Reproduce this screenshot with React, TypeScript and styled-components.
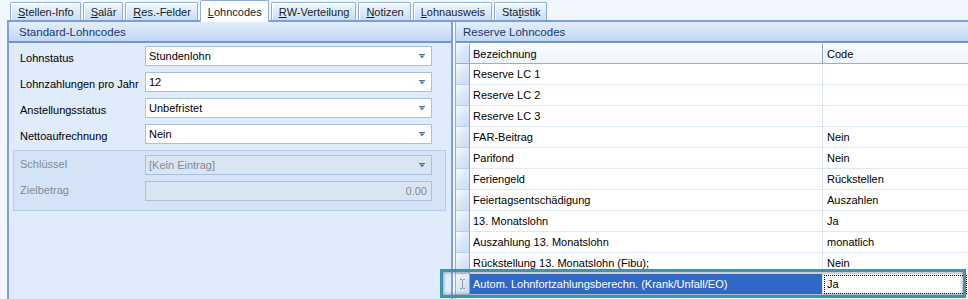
import React from "react";
import styled, { createGlobalStyle } from "styled-components";

const Global = createGlobalStyle`
  html, body { margin: 0; padding: 0; background: #f1f6fd; }
  body { font-family: "Liberation Sans", Arial, sans-serif; font-size: 11px; color: #000; }
  * { box-sizing: border-box; }
`;

const Frame = styled.div`
  position: relative;
  width: 968px;
  height: 299px;
  overflow: hidden;
  background: #f1f6fd;
  display: flex;
  flex-direction: column;
  padding-left: 7px;
`;

const TabStrip = styled.div`
  display: flex;
  align-items: flex-end;
  gap: 2px;
  height: 22px;
  padding-left: 3px;
  border-bottom: 2px solid #7f9fd0;
  flex-shrink: 0;
`;

const Tab = styled.div<{ $active?: boolean }>`
  height: ${(p) => (p.$active ? 22 : 18)}px;
  margin-bottom: ${(p) => (p.$active ? -2 : 0)}px;
  padding: 0 6px 0 7px;
  display: flex;
  align-items: center;
  border: 1px solid #8eafdc;
  border-bottom: none;
  border-radius: 2px 2px 0 0;
  background: ${(p) =>
    p.$active ? "#fbfdff" : "linear-gradient(#f2f7fe, #dce9fa 55%, #c9dcf6)"};
  box-shadow: ${(p) => (p.$active ? "none" : "inset 1px 1px 0 #ffffff")};
  color: #151d2b;
  white-space: nowrap;
  position: relative;
  z-index: ${(p) => (p.$active ? 1 : 0)};
`;

const Content = styled.div`
  display: flex;
  flex: 1;
  min-height: 0;
`;

const LeftPanel = styled.div`
  width: 446px;
  flex-shrink: 0;
  border-left: 2px solid #7fa2d4;
  border-right: 2px solid #7fa2d4;
  background: #e0ebfb;
  display: flex;
  flex-direction: column;
`;

const RightPanel = styled.div`
  flex: 1;
  margin-left: 2px;
  border-left: 1px solid #8fb0dd;
  background: #ffffff;
  display: flex;
  flex-direction: column;
  min-width: 0;
`;

const PanelHeader = styled.div<{ $pad: number }>`
  height: 21px;
  flex-shrink: 0;
  padding-left: ${(p) => p.$pad}px;
  display: flex;
  align-items: center;
  background: linear-gradient(#e3eefc, #d2e3f9 50%, #c0d7f5);
  border-bottom: 2px solid #7496ca;
  color: #15396e;
  font-size: 11.5px;
`;

const LeftBody = styled.div`
  padding: 3px 19px 0 11px;
  display: flex;
  flex-direction: column;
  gap: 6px;
`;

const FieldRow = styled.div`
  display: grid;
  grid-template-columns: 125px 287px;
  align-items: center;
`;

const Label = styled.div<{ $disabled?: boolean }>`
  color: ${(p) => (p.$disabled ? "#7f8b98" : "#000")};
  padding: ${(p) => (p.$disabled ? "0 0 3px" : "3px 0 0")};
  white-space: nowrap;
`;

const GroupBox = styled.div`
  margin: 0 -14px 0 -7px;
  padding: 4px 13px 9px 6px;
  border: 1px solid #b8cdeb;
  background: #d5e3f6;
  display: flex;
  flex-direction: column;
  gap: 6px;
`;

const Combo = styled.div<{ $disabled?: boolean; $right?: boolean }>`
  height: 20px;
  border: 1px solid ${(p) => (p.$disabled ? "#a9c0e1" : "#a7bfe2")};
  background: ${(p) => (p.$disabled ? "#dae5f4" : "#ffffff")};
  color: ${(p) => (p.$disabled ? "#7f8b98" : "#000")};
  display: flex;
  align-items: center;
  justify-content: ${(p) => (p.$right ? "flex-end" : "space-between")};
  padding: 0 4px 0 3px;
  white-space: nowrap;
`;

const Arrow = () => (
  <svg width="6" height="5" viewBox="0 0 6 5" style={{ marginRight: 2 }}>
    <path d="M0 0h6v1H0z M0.5 1.5h5L3 4.2z" fill="#4f6f9e" />
  </svg>
);

const Grid = styled.div`
  display: flex;
  flex-direction: column;
`;

const GridRow = styled.div`
  display: grid;
  grid-template-columns: 14px 353px 1fr;
  height: 21px;
`;

const Indicator = styled.div<{ $head?: boolean }>`
  border-right: 1px solid #86a6d6;
  border-bottom: 1px solid ${(p) => (p.$head ? "#8fb0dd" : "#b9cfee")};
  border-top: ${(p) => (p.$head ? "1px solid #ffffff" : "none")};
  background: linear-gradient(135deg, #f4f8fe, #d6e5f9 60%, #c9dcf6);
  display: flex;
  align-items: center;
  justify-content: center;
`;

const HeadCell = styled.div<{ $last?: boolean }>`
  border-right: ${(p) => (p.$last ? "none" : "1px solid #86a6d6")};
  border-bottom: 1px solid #8fb0dd;
  border-top: 1px solid #ffffff;
  background: linear-gradient(#fbfdff, #eef4fd);
  padding-left: ${(p) => (p.$last ? 4 : 3)}px;
  display: flex;
  align-items: center;
  white-space: nowrap;
`;

const Cell = styled.div<{ $last?: boolean; $selected?: boolean; $focus?: boolean }>`
  border-right: ${(p) => (p.$last ? "none" : "1px solid #dbe6f5")};
  border-bottom: 1px solid #dde8f6;
  background: ${(p) => (p.$selected ? "#3169c6" : "#ffffff")};
  color: ${(p) => (p.$selected ? "#ffffff" : "#000")};
  padding-left: ${(p) => (p.$last ? 4 : 3)}px;
  display: flex;
  align-items: center;
  white-space: nowrap;
  overflow: hidden;
  outline: ${(p) => (p.$focus ? "1px dotted #000" : "none")};
  outline-offset: -2px;
`;

const Highlight = styled.div`
  position: absolute;
  left: 440px;
  top: 269px;
  width: 526px;
  height: 29px;
  border: 3px solid #3c94ae;
  box-shadow: inset 0 0 3px 1px rgba(90, 90, 90, 0.45);
  pointer-events: none;
`;

const IBeam = () => (
  <svg width="5" height="10" viewBox="0 0 5 10">
    <path d="M0 0.5h2M3 0.5h2M2.5 1v8M0 9.5h2M3 9.5h2" stroke="#8d99aa" strokeWidth="1" fill="none" />
  </svg>
);

const Mn = styled.span`
  text-decoration: underline;
`;

const tabs: { t: string; u: number; active?: boolean }[] = [
  { t: "Stellen-Info", u: 0 },
  { t: "Salär", u: 0 },
  { t: "Res.-Felder", u: 0 },
  { t: "Lohncodes", u: 0, active: true },
  { t: "RW-Verteilung", u: 0 },
  { t: "Notizen", u: 0 },
  { t: "Lohnausweis", u: 0 },
  { t: "Statistik", u: 3 },
];

const fields = [
  { label: "Lohnstatus", value: "Stundenlohn" },
  { label: "Lohnzahlungen pro Jahr", value: "12" },
  { label: "Anstellungsstatus", value: "Unbefristet" },
  { label: "Nettoaufrechnung", value: "Nein" },
];

const rows: [string, string][] = [
  ["Reserve LC 1", ""],
  ["Reserve LC 2", ""],
  ["Reserve LC 3", ""],
  ["FAR-Beitrag", "Nein"],
  ["Parifond", "Nein"],
  ["Feriengeld", "Rückstellen"],
  ["Feiertagsentschädigung", "Auszahlen"],
  ["13. Monatslohn", "Ja"],
  ["Auszahlung 13. Monatslohn", "monatlich"],
  ["Rückstellung 13. Monatslohn (Fibu);", "Nein"],
];

export default function App() {
  return (
    <>
      <Global />
      <Frame>
        <TabStrip>
          {tabs.map((tb) => (
            <Tab key={tb.t} $active={tb.active}>
              {tb.t.slice(0, tb.u)}
              <Mn>{tb.t[tb.u]}</Mn>
              {tb.t.slice(tb.u + 1)}
            </Tab>
          ))}
        </TabStrip>
        <Content>
          <LeftPanel>
            <PanelHeader $pad={10}>Standard-Lohncodes</PanelHeader>
            <LeftBody>
              {fields.map((f) => (
                <FieldRow key={f.label}>
                  <Label>{f.label}</Label>
                  <Combo>
                    <span>{f.value}</span>
                    <Arrow />
                  </Combo>
                </FieldRow>
              ))}
              <GroupBox>
                <FieldRow>
                  <Label $disabled>Schlüssel</Label>
                  <Combo $disabled>
                    <span>[Kein Eintrag]</span>
                    <Arrow />
                  </Combo>
                </FieldRow>
                <FieldRow>
                  <Label $disabled>Zielbetrag</Label>
                  <Combo $disabled $right>
                    <span>0.00</span>
                  </Combo>
                </FieldRow>
              </GroupBox>
            </LeftBody>
          </LeftPanel>
          <RightPanel>
            <PanelHeader $pad={7}>Reserve Lohncodes</PanelHeader>
            <Grid>
              <GridRow>
                <Indicator $head />
                <HeadCell>Bezeichnung</HeadCell>
                <HeadCell $last>Code</HeadCell>
              </GridRow>
              {rows.map(([a, b]) => (
                <GridRow key={a}>
                  <Indicator />
                  <Cell>{a}</Cell>
                  <Cell $last>{b}</Cell>
                </GridRow>
              ))}
              <GridRow>
                <Indicator>
                  <IBeam />
                </Indicator>
                <Cell $selected>Autom. Lohnfortzahlungsberechn. (Krank/Unfall/EO)</Cell>
                <Cell $last $focus>Ja</Cell>
              </GridRow>
            </Grid>
          </RightPanel>
        </Content>
        <Highlight />
      </Frame>
    </>
  );
}
